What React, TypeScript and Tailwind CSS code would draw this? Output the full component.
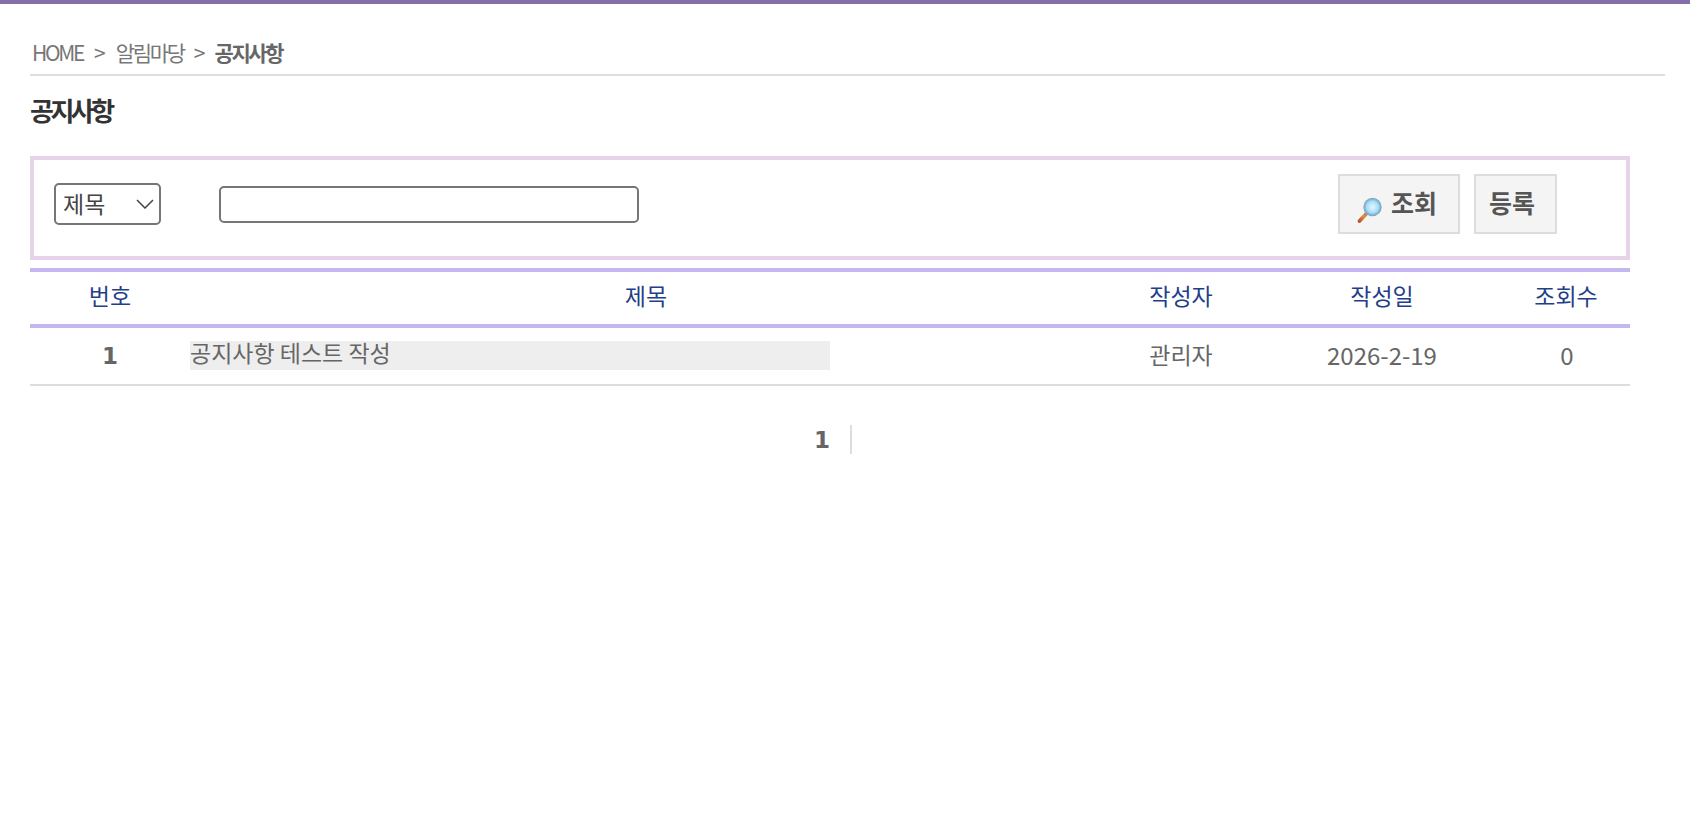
import React from "react";

const font = { fontFamily: '"Noto Sans CJK KR", "Noto Sans", sans-serif' };
const digitFont = { fontFamily: '"DejaVu Sans", sans-serif' };

function Magnifier() {
  return (
    <svg width="28" height="28" viewBox="0 0 28 28" className="shrink-0">
      <defs>
        <radialGradient id="glass" cx="50%" cy="50%" r="55%">
          <stop offset="0%" stopColor="#e6f7ff" />
          <stop offset="60%" stopColor="#a9def8" />
          <stop offset="100%" stopColor="#4f9fd6" />
        </radialGradient>
        <linearGradient id="handle" x1="1" y1="0" x2="0" y2="1">
          <stop offset="0%" stopColor="#a08a78" />
          <stop offset="45%" stopColor="#e08a45" />
          <stop offset="100%" stopColor="#b9572a" />
        </linearGradient>
      </defs>
      <path d="M11 17 L3.5 25" stroke="url(#handle)" strokeWidth="3.8" strokeLinecap="round" />
      <circle cx="16.5" cy="11" r="8.6" fill="url(#glass)" stroke="#8fa7b8" strokeWidth="1.2" />
    </svg>
  );
}

const rows = [{ no: "1", title: "공지사항 테스트 작성", writer: "관리자", date: "2026-2-19", views: "0" }];

export default function App() {
  return (
    <div className="min-h-[832px] bg-white border-t-4 border-[#8470a8] pl-[30px] text-[#666]" style={font}>
      <div className="w-[1635px] h-[72px] border-b-2 border-[#ddd] flex items-end pb-[7px] pl-[2px] text-[21px] leading-[30px] text-[#777]">
        <span className="tracking-[-2.3px]">HOME</span>
        <span className="ml-[11px]">&gt;</span>
        <span className="ml-[10px] tracking-[-2.3px]">알림마당</span>
        <span className="ml-[10px]">&gt;</span>
        <span className="ml-[9px] font-bold tracking-[-2.4px] text-[#666]">공지사항</span>
      </div>

      <h1 className="mt-[16px] h-[35px] text-[26px] leading-[36px] font-bold tracking-[-3.5px] text-[#333]">공지사항</h1>

      <div className="mt-[29px] w-[1600px] h-[104px] border-4 border-[#e6d3ea] flex items-start">
        <div className="relative mt-[23px] ml-[20px] w-[107px] h-[42px]">
          <select
            defaultValue="제목"
            className="appearance-none w-full h-full border-2 border-[#767676] rounded-[5px] bg-white pl-[7px] pb-[2px] text-[23px] text-[#444]"
            style={font}
          >
            <option>제목</option>
          </select>
          <svg width="18" height="10" viewBox="0 0 18 10" className="absolute right-[7px] top-[16px] pointer-events-none">
            <path d="M1 1 L9 9 L17 1" fill="none" stroke="#444" strokeWidth="1.5" />
          </svg>
        </div>
        <input
          type="text"
          className="mt-[26px] ml-[58px] w-[420px] h-[37px] border-2 border-[#767676] rounded-[5px] bg-white"
        />
        <div className="ml-auto mr-[69px] mt-[14px] flex gap-[14px]">
          <button className="w-[122px] h-[60px] border-2 border-[#ddd] bg-[#f4f4f4] flex items-center pl-[16px] text-[25px] font-bold text-[#555]">
            <span className="mt-[11px]"><Magnifier /></span>
            <span className="ml-[7px] -mt-[5px] leading-[30px]">조회</span>
          </button>
          <button className="w-[83px] h-[60px] border-2 border-[#ddd] bg-[#f4f4f4] flex items-center justify-center text-[25px] font-bold text-[#555]">
            <span className="-mt-[5px] leading-[30px] -ml-[7px]">등록</span>
          </button>
        </div>
      </div>

      <table className="mt-[8px] w-[1600px] table-fixed border-collapse text-[23px]">
        <colgroup>
          <col className="w-[160px]" />
          <col className="w-[912px]" />
          <col className="w-[158px]" />
          <col className="w-[244px]" />
          <col className="w-[126px]" />
        </colgroup>
        <thead>
          <tr className="h-[56px] border-y-4 border-[#c5b8f0] text-[#1f3f8a]">
            {["번호", "제목", "작성자", "작성일", "조회수"].map((h, i) => (
              <th key={h} className={i === 4 ? "font-normal text-center p-0 pb-[5px] pr-[2px]" : "font-normal text-center p-0 pb-[5px]"}>{h}</th>
            ))}
          </tr>
        </thead>
        <tbody>
          {rows.map((r) => (
            <tr key={r.no} className="h-[59px] border-b-2 border-[#ddd]">
              <td className="text-center font-bold p-0 text-[23px] text-[#666]" style={digitFont}>{r.no}</td>
              <td className="p-0">
                <span className="block w-[640px] h-[29px] bg-[#eee] leading-[23px] -mt-[2px]">{r.title}</span>
              </td>
              <td className="text-center p-0 pb-[3px]">{r.writer}</td>
              <td className="text-center p-0 pb-[3px] text-[24px]">{r.date}</td>
              <td className="text-center p-0 pb-[3px] text-[24px]">{r.views}</td>
            </tr>
          ))}
        </tbody>
      </table>

      <div className="mt-[39px] w-[1600px] flex justify-center">
        <div className="flex items-center h-[29px] ml-[6px]">
          <span className="text-[23px] font-bold text-[#666] pr-[20px] mt-[2px]" style={digitFont}>1</span>
          <span className="w-[2px] h-[29px] bg-[#ddd]" />
        </div>
      </div>
    </div>
  );
}
